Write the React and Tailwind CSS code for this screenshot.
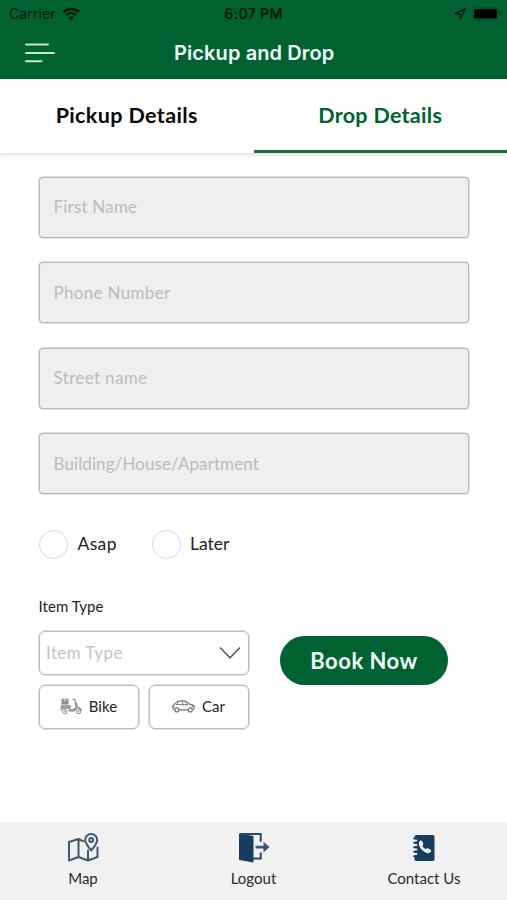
const FIELDS = [
  { label: "First Name", tracking: "tracking-[0.2px]" },
  { label: "Phone Number", tracking: "tracking-[0.33px]" },
  { label: "Street name", tracking: "tracking-[0.35px]" },
  { label: "Building/House/Apartment", tracking: "tracking-[0.1px]" },
];

function StatusBar() {
  return (
    <div className="flex h-[27px] items-center px-[9px] text-[#04170d]">
      <div className="flex flex-1 items-center gap-[6px]">
        <span className="text-[14px] leading-none tracking-[0.1px]">Carrier</span>
        <svg width="18" height="14" viewBox="0 0 18 14" fill="none" stroke="currentColor">
          <path d="M1.2 5.1C5.6.8 12.4.8 16.8 5.1" strokeWidth="2.5" />
          <path d="M4.2 8.2c2.8-2.7 6.8-2.7 9.600 0" strokeWidth="2.3" />
          <path d="M9 13.4 6.2 10.6c1.6-1.5 4-1.5 5.6 0z" fill="currentColor" stroke="none" />
        </svg>
      </div>
      <span className="text-[14px] leading-none font-semibold tracking-[0.35px]">6:07 PM</span>
      <div className="flex flex-1 items-center justify-end gap-[6px]">
        <svg width="12" height="12" viewBox="0 0 12 12" fill="none" stroke="currentColor" strokeWidth="1.5" strokeLinejoin="round">
          <path d="M11 1 1 5.4l5 .6.6 5z" />
        </svg>
        <svg width="30" height="14" viewBox="0 0 30 14" className="-mr-[4px]">
          <rect x=".6" y=".6" width="25.6" height="12.4" rx="3.5" fill="none" stroke="#035029" />
          <rect x="2" y="2" width="23" height="9.6" rx="1.500" fill="#000" />
          <path d="M27.6 4.5c2 .8 2 3.800 0 4.600z" fill="#034322" />
        </svg>
      </div>
    </div>
  );
}

function ScooterIcon() {
  return (
    <svg width="22" height="17" viewBox="0 0 22 17" fill="none" stroke="#8c8c8c">
      <rect x="1.500" y=".8" width="7" height="5.700" fill="#8c8c8c" stroke="none" />
      <path d="M4.300.8v2.400l.8-.6.8.6V.8" stroke="#ddd" strokeWidth=".7" />
      <path d="M1 7.500h9.500v2.400H1z" fill="#aaa" strokeWidth=".7" />
      <path d="M12.500 1.300h2l3.300 8.200c2 .3 3.200 1.600 3.400 3.300M15 4l1.500 6-2.500 2.800H8.500M1 12.500c0-1.700 1-2.600 2.600-2.600h5.200l1.500 2h3.200l1.800-2" strokeWidth="1.300" />
      <circle cx="4.800" cy="13.600" r="2.200" /><circle cx="18.500" cy="13.600" r="2.200" />
      <circle cx="4.800" cy="13.600" r=".5" /><circle cx="18.500" cy="13.600" r=".5" />
    </svg>
  );
}

function CarIcon() {
  return (
    <svg width="23" height="13" viewBox="0 0 23 13" fill="none" stroke="#707070" strokeWidth="1.100" strokeLinejoin="round">
      <path d="M2.700 9.700C.8 9.300.5 8.300.7 6.800.9 5.300 1.500 4.600 2.500 4.200L5 1.900C7.500.5 13 .5 15 1.900l2.400 2.200c3 .4 4.800 1.400 4.900 3.200.1 1.500-.4 2.200-1.700 2.400M7 9.900h9.200" />
      <path d="M3.700 4.500h12.600M6 2.300 5.200 4.500M10.300 1.200l.9 4.600M13.200 1.700l1.500 2.800-1 2" strokeWidth=".8" />
      <circle cx="4.900" cy="9.900" r="2" /><circle cx="18.300" cy="9.900" r="2" />
      <path d="M1 6.700h1.700M19.500 6.500H22" />
    </svg>
  );
}

function MapIcon() {
  return (
    <svg width="32" height="32" viewBox="0 0 32 32" fill="none" stroke="#3d5970" strokeWidth="2" strokeLinejoin="round" strokeLinecap="round">
      <path d="M16.500 9.400 11.500 7 2 10v18.500l9.500-3.500 9.500 3.500 9.500-3.500V15.500M11.500 7v18M21 18.500v10" />
      <path d="M24.200 18.500c-3.900-4.700-6-7.600-6-10.500a6 6 0 0 1 12 0c0 2.900-2.100 5.800-6 10.500z" />
      <circle cx="24.200" cy="8" r="2" />
    </svg>
  );
}

function LogoutIcon() {
  return (
    <svg width="32" height="32" viewBox="0 0 32 32" fill="none">
      <path d="M1 1.500 15.500 4v26.500L1 28z" fill="#173d5e" />
      <path d="M2 2h20.700v7.800M22.700 20.500v6H15" stroke="#274a68" strokeWidth="2" />
      <path d="M17.500 13.800h8v-4l6 5.300-6 5.300v-4h-8z" fill="#3a5871" />
    </svg>
  );
}

function ContactIcon() {
  return (
    <svg width="24" height="28" viewBox="0 0 24 28" fill="none">
      <rect x="2.500" y="1" width="20" height="26" rx="1.800" fill="#173d5e" />
      <path d="M2 6.500h2.500M2 11h2.500M2 15.500h2.500M2 20h2.500" stroke="#f1f1f1" strokeWidth="1.800" strokeLinecap="round" />
      <path d="M1.800 4.500h3M1.800 8.800h3M1.800 13.200h3M1.800 17.700h3M1.800 22.200h3" stroke="#173d5e" strokeWidth="1.500" strokeLinecap="round" />
      <path d="M7.500 7.200c.8-.9 2-1 2.600 0l1.100 2.100c.4.800 0 1.500-.9 2.200.6 1.800 1.700 2.900 3.500 3.600.7-.9 1.500-1.200 2.300-.7l2.500 1.300c.8.500.8 1.500 0 2.400-1.800 1.800-4.800 1.200-7.600-1.300-3.500-3.100-5.100-7.200-3.500-9.600z" fill="#f5f5f5" />
    </svg>
  );
}

function NavItem({ icon, label }) {
  return (
    <button className="flex w-[170.500px] shrink-0 flex-col items-center">
      <span className="flex h-[32px] items-center">{icon}</span>
      <span className="mt-[4px] text-[15px] leading-[20px] text-[#2b2b2b]">{label}</span>
    </button>
  );
}

export default function App() {
  return (
    <div className="flex h-[900px] w-[507px] flex-col overflow-hidden bg-white font-[Lato,sans-serif] text-[#222]">
      <header className="h-[79px] shrink-0 bg-[#006233] font-[Inter,sans-serif]">
        <StatusBar />
        <div className="flex h-[52px] items-center">
          <div className="w-[174px] pl-[24px]">
            <svg width="32" height="22" viewBox="0 0 32 22" stroke="#c5e6d0" strokeWidth="2" strokeLinecap="round">
              <path d="M2 2.500h22M2 11h28M2 19.200h15.500" />
            </svg>
          </div>
          <h1 className="text-[20px] leading-none font-semibold tracking-[0.1px] whitespace-nowrap text-[#f0fff5]">Pickup and Drop</h1>
        </div>
      </header>

      <div className="flex h-[74px] shrink-0 text-[21.500px] font-bold shadow-[0_2px_4px_rgba(0,0,0,0.12)]">
        <button className="flex-1 pb-[1px] tracking-[0.38px] text-[#080808]">Pickup Details</button>
        <button className="flex-1 border-b-[3px] border-[#176c40] pt-[2px] tracking-[0.3px] text-[#006233]">Drop Details</button>
      </div>

      <main className="flex flex-1 flex-col px-[38.500px] pt-[23.500px]">
        <div className="flex flex-col gap-[24.500px]">
          {FIELDS.map(({ label, tracking }) => (
            <div key={label} className={`flex h-[61px] items-center rounded-[4px] border border-[#b9b9b9] bg-[#efefef] pl-[14px] text-[17px] text-[#bbb] ring-[0.5px] ring-[#c4c4c4] ${tracking}`}>
              {label}
            </div>
          ))}
        </div>

        <div className="mt-[35.500px] flex h-[29px] items-center text-[17.500px]">
          <span className="h-[29px] w-[29px] rounded-full border border-[#d9d9d9]" />
          <span className="ml-[10px] w-[74px] tracking-[0.35px]">Asap</span>
          <span className="h-[29px] w-[29px] rounded-full border border-[#d9d9d9]" />
          <span className="ml-[9.500px]">Later</span>
        </div>

        <div className="mt-[37.500px] text-[15px] leading-[20px] tracking-[0.05px]">Item Type</div>
        <div className="mt-[15px] flex">
          <div className="w-[210px]">
            <div className="flex h-[44px] items-center justify-between rounded-[6px] border border-[#bababa] pr-[7px] pl-[6.500px] text-[17px] tracking-[0.4px] text-[#c5c5c5] ring-[0.5px] ring-[#c8c8c8]">
              Item Type
              <svg width="22" height="14" viewBox="0 0 22 14" fill="none" stroke="#5a5a5a" strokeWidth="1.500">
                <path d="m1 1.500 10 10.300L21 1.500" />
              </svg>
            </div>
            <div className="mt-[10px] flex gap-[10px] text-[15px]">
              <button className="flex h-[44px] flex-1 items-center justify-center gap-[7px] rounded-[6px] border border-[#bababa] pb-[1px] tracking-[0.1px] ring-[0.5px] ring-[#c8c8c8]"><ScooterIcon />Bike</button>
              <button className="flex h-[44px] flex-1 items-center justify-center gap-[7px] rounded-[6px] border border-[#bababa] pb-[1px] tracking-[0.1px] ring-[0.5px] ring-[#c8c8c8]"><CarIcon />Car</button>
            </div>
          </div>
          <button className="mt-[5px] ml-[31.500px] h-[49px] w-[168px] rounded-full bg-[#006233] text-[22px] font-bold tracking-[0.5px] text-[#f3fff7]">Book Now</button>
        </div>
      </main>

      <nav className="flex h-[78px] shrink-0 justify-center bg-[#f1f1f1] pt-[10px]">
        <NavItem icon={<MapIcon />} label="Map" />
        <NavItem icon={<LogoutIcon />} label="Logout" />
        <NavItem icon={<ContactIcon />} label="Contact Us" />
      </nav>
    </div>
  );
}
